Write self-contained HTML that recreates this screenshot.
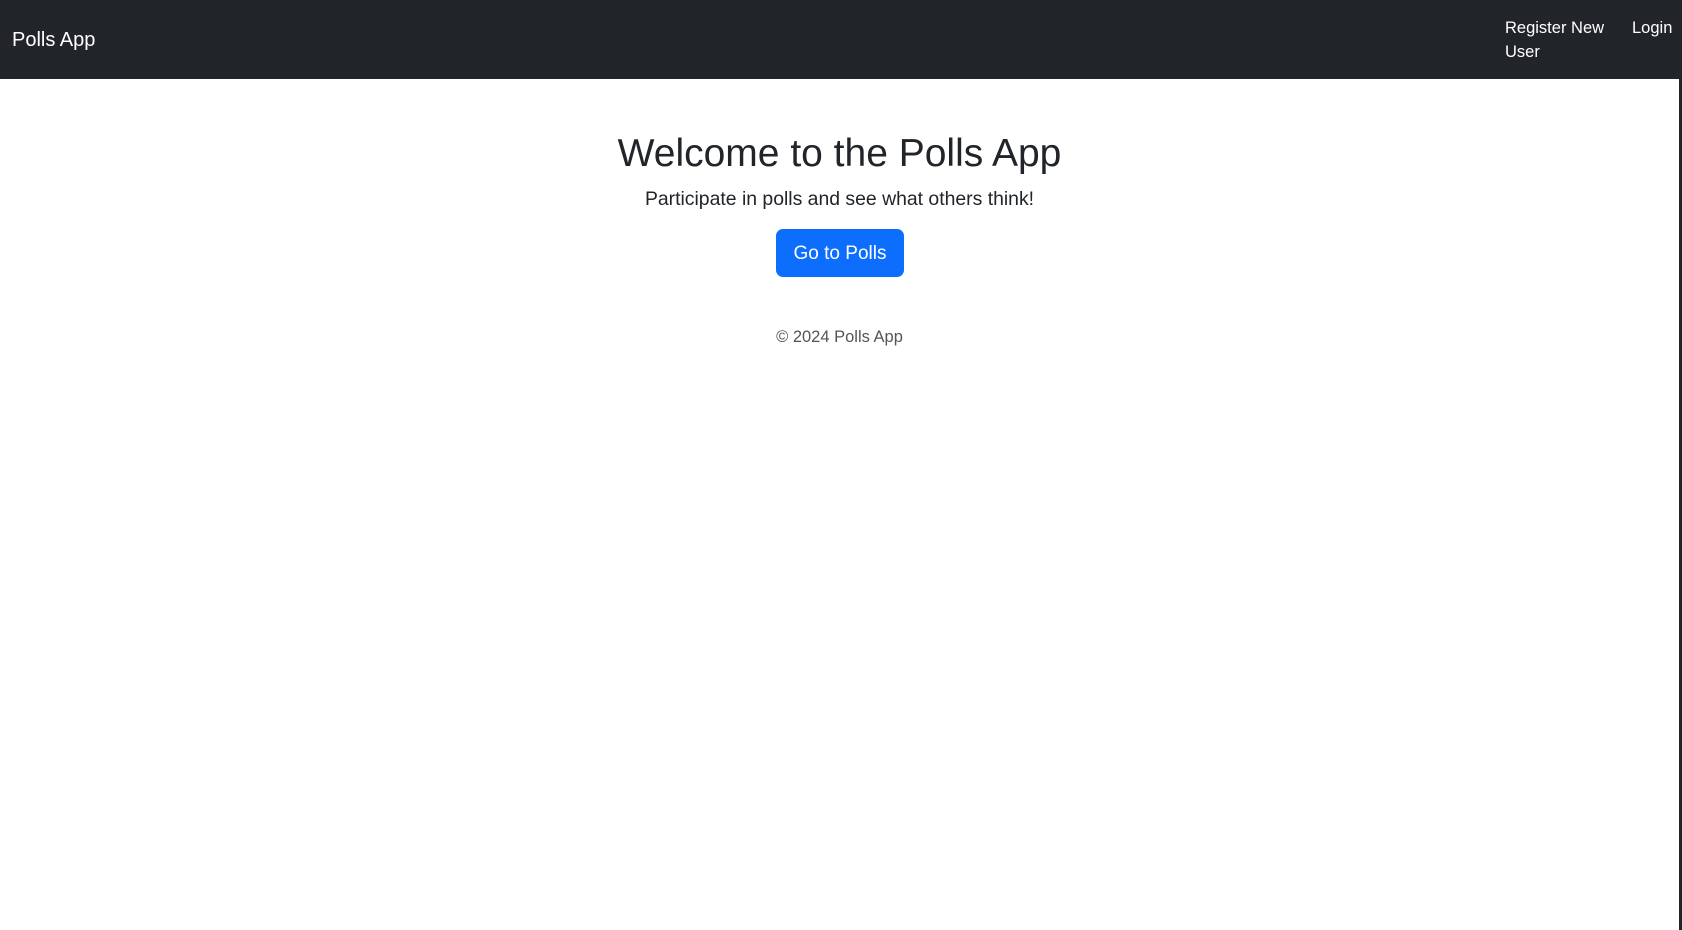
<!DOCTYPE html>
<html><head><style>
body{margin:0;width:1682px;height:930px;background:#212529;font-family:"Liberation Sans",sans-serif;overflow:hidden;position:relative}
.main{position:absolute;left:0;top:79px;width:1679px;height:851px;background:#fff}
nav{position:absolute;left:0;top:0;width:1682px;height:79px;background:#212529;color:#fff}
.brand{position:absolute;left:12px;top:29px;font-size:20px}
.reg{position:absolute;left:1505px;top:16px;font-size:16.5px;line-height:24px;width:110px}
.login{position:absolute;left:1632px;top:16px;font-size:16.5px;line-height:24px}
.c{position:absolute;left:0;width:1679px;text-align:center;color:#212529}
h1{margin:0;font-weight:normal;font-size:39px}
.btn{position:absolute;left:776px;top:229px;width:128px;height:48px;background:#0d6efd;border-radius:7px;color:#fff;font-size:19px;line-height:50px;text-align:center}
</style></head><body>
<nav><div class="brand">Polls App</div><div class="reg">Register New User</div><div class="login">Login</div></nav>
<div class="main"></div>
<div class="c" style="top:132px"><h1>Welcome to the Polls App</h1></div>
<div class="c" style="top:188px;font-size:19.4px">Participate in polls and see what others think!</div>
<div class="btn">Go to Polls</div>
<div class="c" style="top:328px;font-size:16.5px;color:#555">© 2024 Polls App</div>
</body></html>
